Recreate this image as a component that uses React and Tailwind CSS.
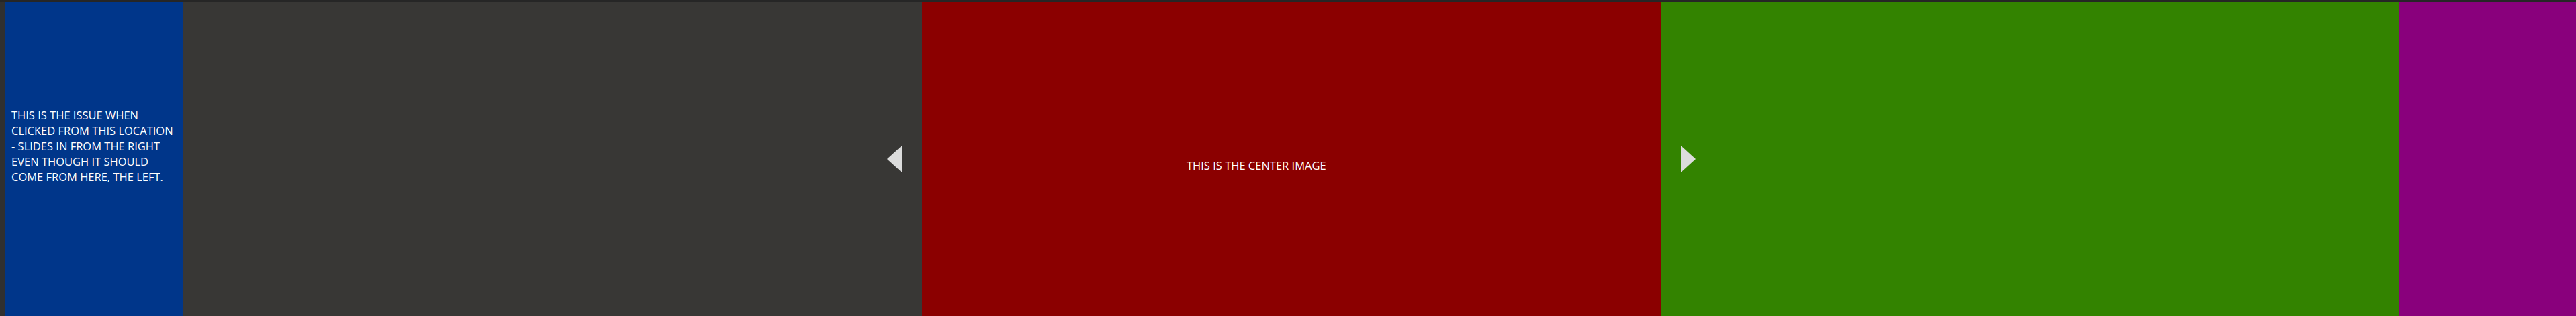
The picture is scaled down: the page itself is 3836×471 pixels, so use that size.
import React from 'react';

const font = { fontFamily: '"Open Sans", "Noto Sans", sans-serif' };

function Arrow({ dir }) {
  return (
    <svg width="22" height="40" viewBox="0 0 22 40" className="block">
      {dir === 'left' ? (
        <polygon points="22,0 22,40 0,20" fill="#dcdcdc" />
      ) : (
        <polygon points="0,0 0,40 22,20" fill="#dcdcdc" />
      )}
    </svg>
  );
}

export default function App() {
  const lines = [
    'THIS IS THE ISSUE WHEN',
    'CLICKED FROM THIS LOCATION',
    '- SLIDES IN FROM THE RIGHT',
    'EVEN THOUGH IT SHOULD',
    'COME FROM HERE, THE LEFT.',
  ];

  return (
    <div className="w-[3836px] h-[471px] bg-[#303030] flex flex-col overflow-hidden" style={font}>
      {/* top strip */}
      <div className="h-[3px] shrink-0 bg-[#262626] flex">
        <div className="w-[361px] h-full border-r border-[#3c3c3c]" />
      </div>

      <div className="flex-1 flex pl-[8px] overflow-hidden">
        {/* left slide (partly visible) */}
        <div className="w-[265px] shrink-0 bg-[#00368a] text-white text-[16.5px] leading-[23px] pl-[9px] pt-[157px]">
          {lines.map((l) => (
            <div key={l} className="whitespace-nowrap">{l}</div>
          ))}
        </div>

        {/* previous slide with left arrow */}
        <div className="w-[1100px] shrink-0 bg-[#383735] flex items-center justify-end pr-[30px]">
          <Arrow dir="left" />
        </div>

        {/* center slide */}
        <div className="w-[1100px] shrink-0 bg-[#8b0000] text-white text-[16.5px] leading-[23px] pl-[394px] pt-[232px]">
          <span className="whitespace-nowrap">THIS IS THE CENTER IMAGE</span>
        </div>

        {/* next slide with right arrow */}
        <div className="w-[1100px] shrink-0 bg-[#338300] flex items-center pl-[30px]">
          <Arrow dir="right" />
        </div>

        {/* far right slide */}
        <div className="flex-1 bg-[#89007c]" />
      </div>
    </div>
  );
}
